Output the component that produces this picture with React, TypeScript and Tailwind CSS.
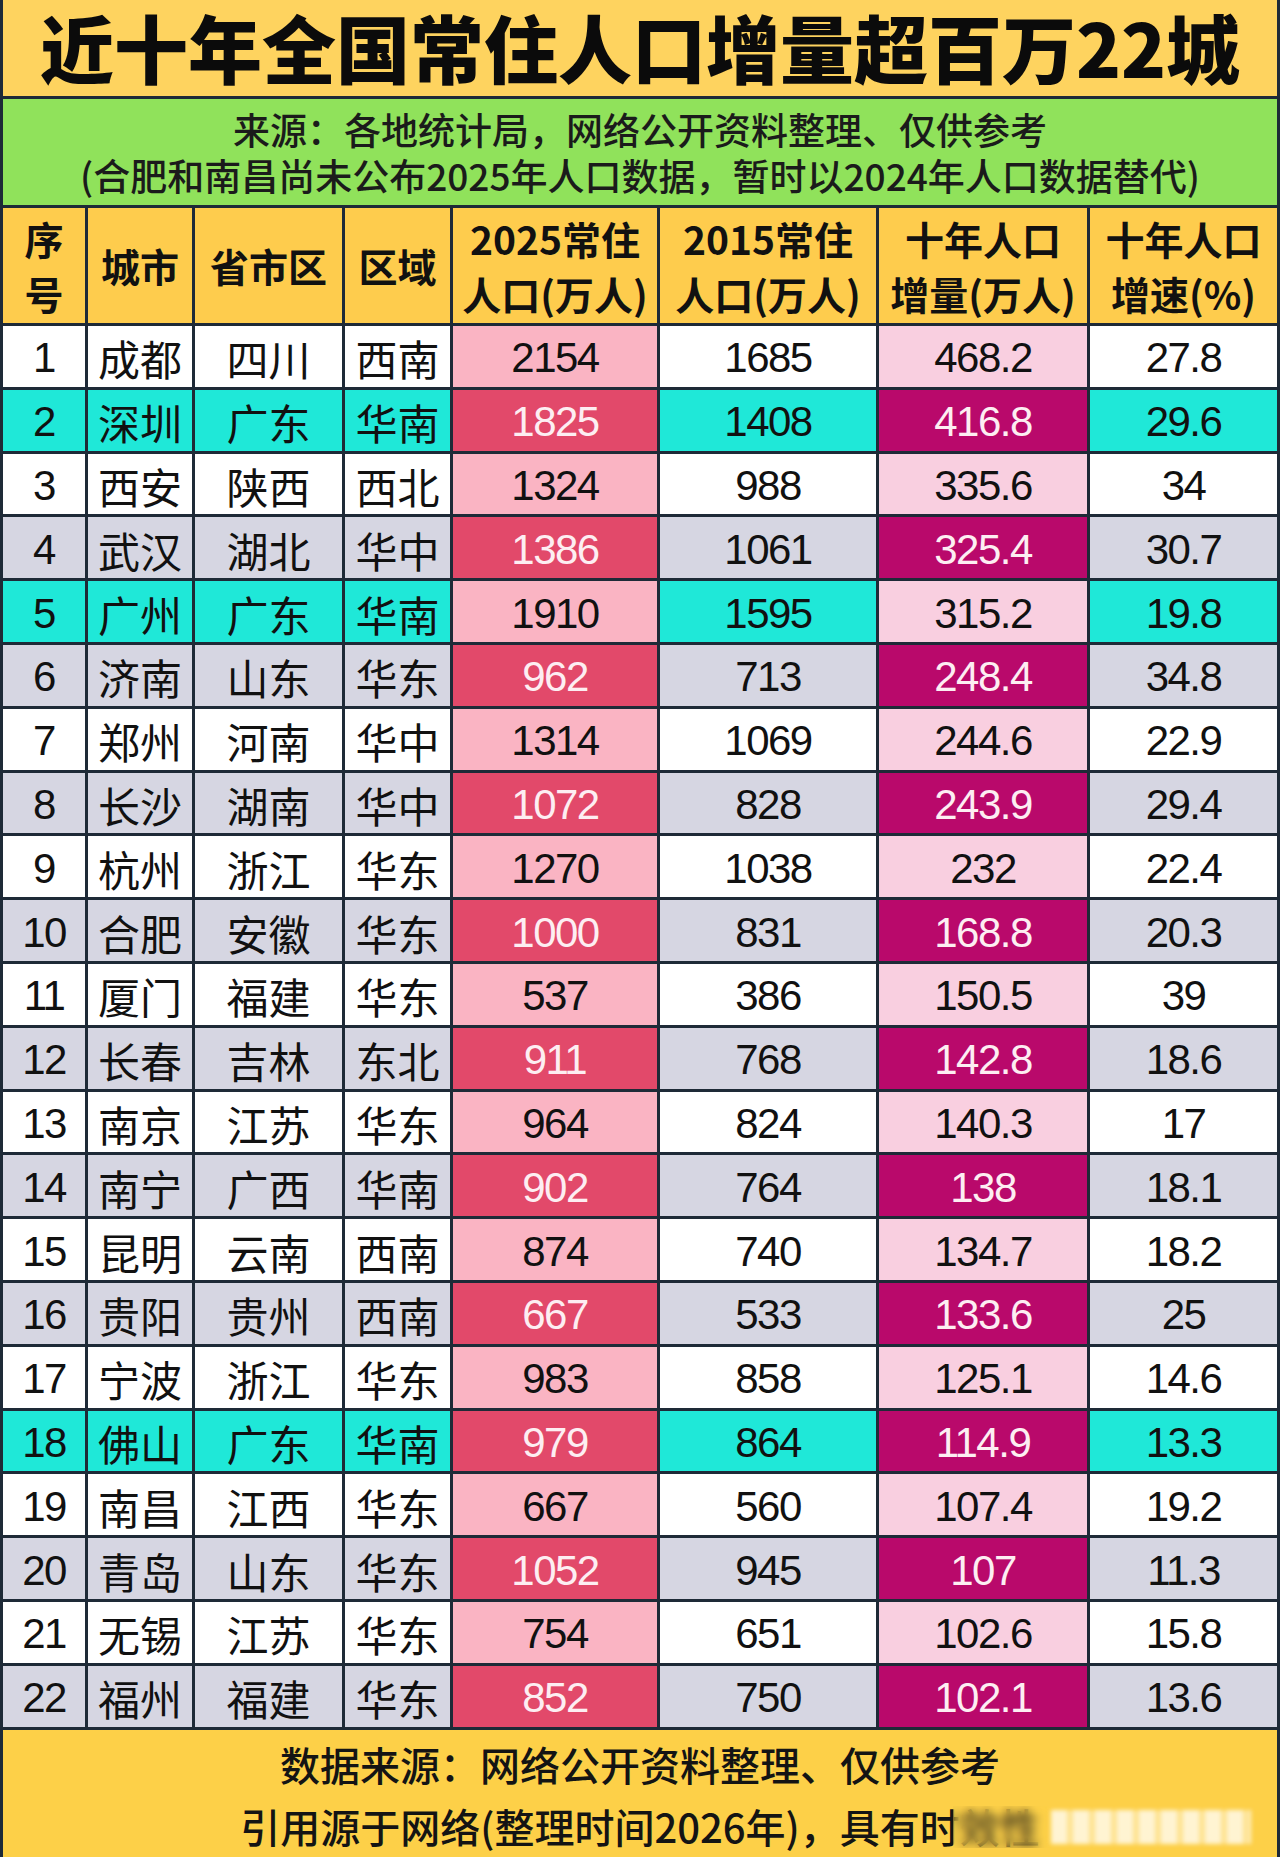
import React from "react";
import clsx from "clsx";

type Row = [number, string, string, string, string, string, string, string];

const rows: Row[] = [
  [1, "成都", "四川", "西南", "2154", "1685", "468.2", "27.8"],
  [2, "深圳", "广东", "华南", "1825", "1408", "416.8", "29.6"],
  [3, "西安", "陕西", "西北", "1324", "988", "335.6", "34"],
  [4, "武汉", "湖北", "华中", "1386", "1061", "325.4", "30.7"],
  [5, "广州", "广东", "华南", "1910", "1595", "315.2", "19.8"],
  [6, "济南", "山东", "华东", "962", "713", "248.4", "34.8"],
  [7, "郑州", "河南", "华中", "1314", "1069", "244.6", "22.9"],
  [8, "长沙", "湖南", "华中", "1072", "828", "243.9", "29.4"],
  [9, "杭州", "浙江", "华东", "1270", "1038", "232", "22.4"],
  [10, "合肥", "安徽", "华东", "1000", "831", "168.8", "20.3"],
  [11, "厦门", "福建", "华东", "537", "386", "150.5", "39"],
  [12, "长春", "吉林", "东北", "911", "768", "142.8", "18.6"],
  [13, "南京", "江苏", "华东", "964", "824", "140.3", "17"],
  [14, "南宁", "广西", "华南", "902", "764", "138", "18.1"],
  [15, "昆明", "云南", "西南", "874", "740", "134.7", "18.2"],
  [16, "贵阳", "贵州", "西南", "667", "533", "133.6", "25"],
  [17, "宁波", "浙江", "华东", "983", "858", "125.1", "14.6"],
  [18, "佛山", "广东", "华南", "979", "864", "114.9", "13.3"],
  [19, "南昌", "江西", "华东", "667", "560", "107.4", "19.2"],
  [20, "青岛", "山东", "华东", "1052", "945", "107", "11.3"],
  [21, "无锡", "江苏", "华东", "754", "651", "102.6", "15.8"],
  [22, "福州", "福建", "华东", "852", "750", "102.1", "13.6"],
];

const headers = [
  ["序", "号"],
  ["城市"],
  ["省市区"],
  ["区域"],
  ["2025常住", "人口(万人)"],
  ["2015常住", "人口(万人)"],
  ["十年人口", "增量(万人)"],
  ["十年人口", "增速(%)"],
];

const num = "font-['Liberation_Sans','Noto_Sans_CJK_SC',sans-serif] tracking-[-1.5px]";

const App = () => {
  return (
    <div className="w-[1280px] h-[1857px] overflow-hidden bg-[#1e2a37] px-[3px] pb-[3px] flex flex-col gap-[3px] font-['Noto_Sans_CJK_SC','Noto_Sans',sans-serif] text-[#111]">
      {/* title */}
      <div className="h-[96px] shrink-0 bg-[#fed35f] flex items-center justify-center pb-[4px] text-[74px] font-black leading-[1.15] text-[#0b0b0b]">
        近十年全国常住人口增量超百万22城
      </div>

      <div className="h-[106px] shrink-0 bg-[#90e25b] flex flex-col items-center justify-center text-[37px] font-medium leading-[46px] text-[#1b1b1b]">
        <p>来源：各地统计局，网络公开资料整理、仅供参考</p>
        <p>(合肥和南昌尚未公布2025年人口数据，暂时以2024年人口数据替代)</p>
      </div>

      <div className="grid shrink-0 gap-[3px] grid-cols-[82px_104px_147px_105px_204px_216px_208px_187px] grid-rows-[115px_repeat(22,60.8px)]">
        {headers.map((h, i) => (
          <div
            key={i}
            className="bg-[#fecc4d] flex flex-col items-center justify-center text-[39px] font-bold leading-[55px] text-[#111]"
          >
            {h.map((line) => (
              <span key={line}>{line}</span>
            ))}
          </div>
        ))}

        {rows.map((r) => {
          const [no, city, prov, area, p25, p15, inc, rate] = r;
          const even = no % 2 === 0;
          const base = prov === "广东" ? "bg-[#1fe8d8]" : even ? "bg-[#d6d6e2]" : "bg-white";
          const cell = "flex items-center justify-center text-[42px] leading-none pt-[4px]";
          return (
            <React.Fragment key={no}>
              <div className={clsx(cell, base, num)}>{no}</div>
              <div className={clsx(cell, base)}>{city}</div>
              <div className={clsx(cell, base)}>{prov}</div>
              <div className={clsx(cell, base)}>{area}</div>
              <div
                className={clsx(
                  cell,
                  num,
                  even ? "bg-[#e2496a] text-[#fdeef2]" : "bg-[#fab4c3]"
                )}
              >
                {p25}
              </div>
              <div className={clsx(cell, base, num)}>{p15}</div>
              <div
                className={clsx(
                  cell,
                  num,
                  even ? "bg-[#b9096b] text-[#fdeef2]" : "bg-[#f9cfe0]"
                )}
              >
                {inc}
              </div>
              <div className={clsx(cell, base, num)}>{rate}</div>
            </React.Fragment>
          );
        })}
      </div>

      {/* footer + blurred watermark */}
      <div className="relative flex-1 bg-[#fdd048] flex flex-col items-center pt-[3px] text-[40px] font-medium leading-[62px] text-[#141414]">
        <p>数据来源：网络公开资料整理、仅供参考</p>
        <p>引用源于网络(整理时间2026年)，具有时效性</p>
        <div className="absolute left-[950px] top-[76px] w-[98px] h-[42px] backdrop-blur-[5px] bg-[#fdd048]/20" />
        <div className="absolute left-[1048px] top-[80px] w-[200px] h-[34px] blur-[2px] opacity-80 bg-[repeating-linear-gradient(90deg,rgba(255,255,255,0.95)_0px,rgba(255,255,255,0.95)_16px,rgba(255,255,255,0.5)_16px,rgba(255,255,255,0.5)_22px)]" />
      </div>
    </div>
  );
};

export default App;
